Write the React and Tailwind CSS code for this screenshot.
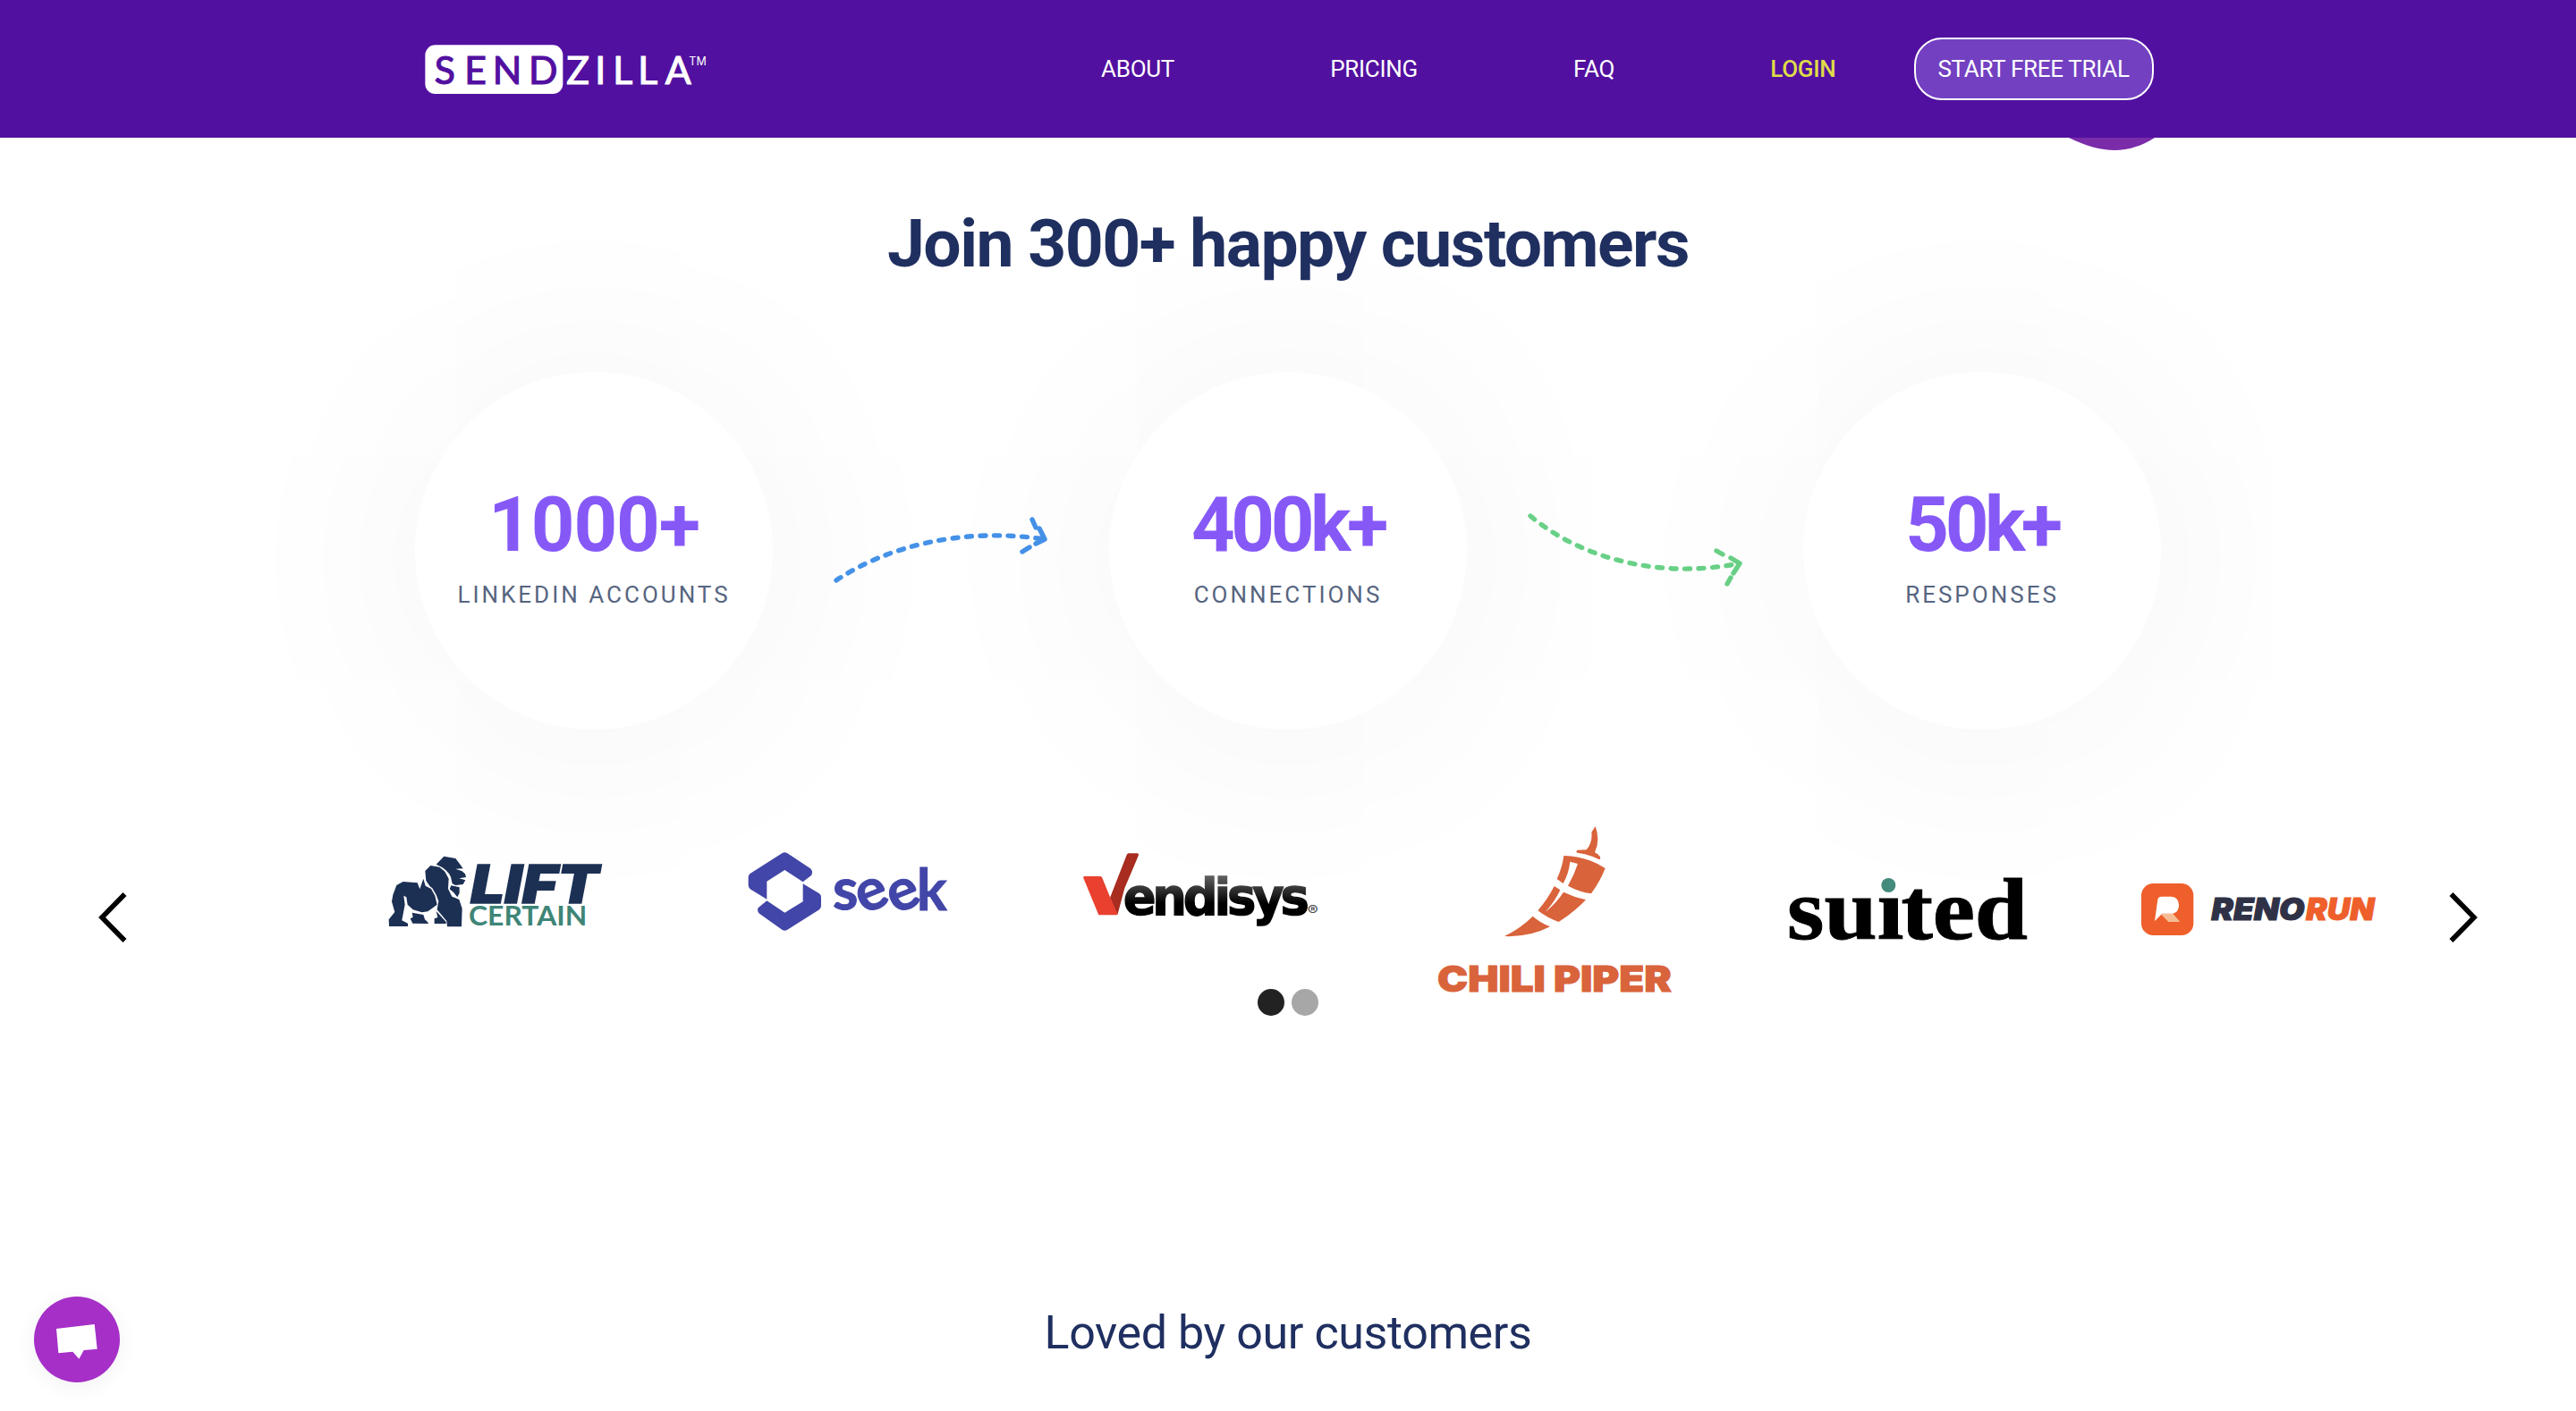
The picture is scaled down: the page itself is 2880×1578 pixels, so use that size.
import React from 'react';

const navLinks = [
  { label: 'ABOUT', className: 'text-white' },
  { label: 'PRICING', className: 'text-white' },
  { label: 'FAQ', className: 'text-white' },
  { label: 'LOGIN', className: 'font-medium text-[#dedc48]' },
];

const SendzillaLogo = () => (
  <svg className="mt-0.5 h-14 w-[315px]" viewBox="105 90 945 168">
    <rect x="106" y="91" width="462" height="164" rx="34" fill="#fff" />
    <g fontFamily="Lato, sans-serif" fontSize="128" strokeWidth="3.5">
      <text x="137 238 332 453" y="221" fill="#5210a0" stroke="#5210a0">SEND</text>
      <text x="580 676 736 820 911" y="221" fill="#fff" stroke="#fff">ZILLA</text>
    </g>
    <text x="991" y="158" fill="#fff" fontFamily="Inter, sans-serif" fontSize="39" textLength="58" lengthAdjust="spacingAndGlyphs">TM</text>
  </svg>
);

const Header = () => (
  <header className="flex h-[154px] items-center bg-[#5210a0] pl-[475px]">
    <SendzillaLogo />
    <nav className="ml-[354px] flex items-center text-[26px] tracking-[-0.3px]">
      {navLinks.map((link) => (
        <a key={link.label} href="#" className={`px-[87.1px] ${link.className}`}>
          {link.label}
        </a>
      ))}
      <a
        href="#"
        className="flex h-[70px] w-[268px] items-center justify-center rounded-[31px] border-2 border-white bg-[#7340c1] text-white"
      >
        START FREE TRIAL
      </a>
    </nav>
  </header>
);

const Stat = ({ value, label, valueClass }) => (
  <div className="flex size-[400px] flex-col items-center rounded-full bg-white pt-[121px] shadow-[0_10px_320px_rgba(0,0,0,0.06)]">
    <div className={`text-[85px] leading-[100px] font-bold text-[#8659f7] ${valueClass}`}>{value}</div>
    <div className="mt-[13px] text-[26px] leading-[30px] tracking-[3px] whitespace-nowrap text-[#56657f]">{label}</div>
  </div>
);

const BlueArrow = () => (
  <svg className="h-[90px] w-[376px]" viewBox="864 571 376 90" fill="none" stroke="#4592e8" strokeWidth="5.4" strokeLinecap="round">
    <path d="M935 649C990 612 1075 589 1167 603" strokeDasharray="6 9.5" />
    <path d="M1168 603L1162 591M1158 590L1154 581M1168 603L1158 608M1151 612L1143 617" />
  </svg>
);

const GreenArrow = () => (
  <svg className="h-[100px] w-[376px]" viewBox="1640 565 376 100" fill="none" stroke="#69d187" strokeWidth="5.4" strokeLinecap="round">
    <path d="M1711 577C1768 625 1856 648 1945 630" strokeDasharray="6 9.5" />
    <path d="M1945 630L1935 624M1926 620L1919 616M1945 630L1938 641M1935 646L1931 653" />
  </svg>
);

const Chevron = ({ flipped }) => (
  <svg className={`mt-[86px] h-[60px] w-8 shrink-0 ${flipped ? '-scale-x-100' : ''}`} viewBox="0 0 32 60" fill="none" stroke="#000" strokeWidth="5.6">
    <path d="M2.5 4L28 30L2.5 56" />
  </svg>
);

const LiftCertain = () => (
  <svg className="mt-[30px] h-[120px] w-[270px] shrink-0" viewBox="0 0 810 360">
    <g fill="#1c3054">
      <path d="M203 80L229 53L268 60L281 77L293 94L268 95L290 103L300 112L303 123L280 127L301 133L293 147L268 150L257 145L252 122Q240 95 203 80Z" />
      <path d="M253 151L268 154L281 157L281 176L274 190L262 175L248 163Z" />
      <path d="M166 102L184 84L214 89L232 104L245 128L243 162L256 188L280 198L290 228L288 289L240 289L238 270L206 232L211 203L203 182L190 160L182 154L169 135Z" />
      <path d="M70 150L92 138L140 142L148 163L160 128L167 152L186 162L199 185L206 215L175 238L155 241L125 232L107 215L103 190L94 185L98 215L88 268L108 278L108 288L45 288L44 265L64 240L54 205L58 182Z" />
      <path d="M122 242L160 249L165 265L176 275L176 279L124 278L116 262L125 257Z" />
      <path d="M203 237L236 273L236 279L197 279L197 262L208 258Z" />
    </g>
    <text x="318" y="211" fill="#1c3054" stroke="#1c3054" strokeWidth="4" fontFamily="Inter, sans-serif" fontWeight="900" fontStyle="italic" fontSize="178" textLength="430" lengthAdjust="spacingAndGlyphs">LIFT</text>
    <text x="312" y="286" fill="#3f8577" fontFamily="Lato, sans-serif" fontWeight="700" fontSize="91" textLength="397" lengthAdjust="spacingAndGlyphs">CERTAIN</text>
  </svg>
);

const Seek = () => (
  <svg className="mt-5 ml-[130px] h-[130px] w-[260px] shrink-0" viewBox="0 0 780 390" fill="#4246a8">
    <path d="M164 72Q172 67 180 72L258 124Q268 132 262 146L233 169L172 129L112 167L112 227L56 193Q50 188 50 180L50 152Q50 145 57 140Z" />
    <path d="M233 175L288 208Q294 212 294 220L294 250Q294 257 288 262L180 330Q172 335 164 330L87 275Q78 266 83 256L112 232L172 272L233 235Z" />
    <g fontFamily="Lato, sans-serif" fontWeight="700" fontSize="194" stroke="#4246a8" strokeWidth="3">
      <text x="333" y="262">s</text>
      <text x="413" y="261" transform="rotate(-22 466 213)">e</text>
      <text x="519" y="261" transform="rotate(-22 572 213)">e</text>
      <text x="615" y="263" textLength="101" lengthAdjust="spacingAndGlyphs">k</text>
    </g>
  </svg>
);

const Vendisys = () => (
  <svg className="mt-5 ml-[110px] h-[130px] w-[310px] shrink-0" viewBox="0 0 930 390">
    <defs>
      <linearGradient id="vendisys" gradientUnits="userSpaceOnUse" x1="0" y1="150" x2="0" y2="280">
        <stop offset="0" stopColor="#606060" />
        <stop offset="0.7" stopColor="#000" />
      </linearGradient>
    </defs>
    <path d="M153 222L210 76L215 73L247 73L249 79L202 190L178 280Z" fill="#a82c1f" />
    <path d="M66 150L121 150L126 153L154 222L178 276L175 280L115 280L63 154Z" fill="#ea402f" />
    <text x="197" y="279" fill="url(#vendisys)" stroke="url(#vendisys)" strokeWidth="4" fontFamily="'DejaVu Sans', sans-serif" fontWeight="700" fontSize="170" letterSpacing="-13" textLength="612" lengthAdjust="spacingAndGlyphs">endisys</text>
    <text x="815" y="282" fill="#444" fontFamily="Inter, sans-serif" fontSize="46" textLength="36" lengthAdjust="spacingAndGlyphs">®</text>
  </svg>
);

const ChiliPiper = () => (
  <svg className="ml-[90px] h-[210px] w-[300px] shrink-0" viewBox="0 0 900 630" fill="#d9633b">
    <path d="M581 42L568 62Q572 95 551 121L520 122Q515 128 520 131Q560 136 594 154Q600 152 596 143Q590 135 579 130Q598 90 581 42Z" />
    <path d="M475 141Q550 142 614 183Q598 225 567 268Q525 262 489 242Q510 205 522 168L496 161Q492 200 473 234L452 219Q470 180 475 141Z" />
    <path d="M443 243L463 256Q445 295 413 330Q450 300 474 263Q510 280 549 289Q510 330 458 363Q420 350 388 325Q422 285 443 243Z" />
    <path d="M371 344Q395 365 429 379Q360 415 276 411Q330 385 371 344Z" />
    <text x="51" y="597" stroke="#d9633b" strokeWidth="3" fontFamily="Inter, sans-serif" fontWeight="900" fontSize="118" textLength="785" lengthAdjust="spacingAndGlyphs">CHILI PIPER</text>
  </svg>
);

const Suited = () => (
  <svg className="mt-[50px] ml-[90px] h-[110px] w-[300px] shrink-0 overflow-visible" viewBox="0 0 900 330">
    <text
      x="49 162 324 397 493 621"
      y="270"
      transform="scale(1.1 1)"
      stroke="#000"
      strokeWidth="3"
      fontFamily="'Liberation Serif', serif"
      fontWeight="700"
      fontSize="290"
    >
      suited
    </text>
    <circle cx="398" cy="95" r="35" fill="#fff" />
    <circle cx="394" cy="90" r="24" fill="#458b7d" />
  </svg>
);

const RenoRun = () => (
  <svg className="mt-[50px] ml-[90px] h-[110px] w-[300px] shrink-0" viewBox="0 0 900 330">
    <rect x="72" y="84" width="175" height="174" rx="40" fill="#ee5f2b" />
    <path d="M142 185L178 185L202 213L163 213L139 188Z" fill="#f6bd95" />
    <path d="M127 138Q129 128 140 128L172 128Q198 130 198 157Q198 180 178 185L142 185L117 210Z" fill="#fff" />
    <g fontFamily="Inter, sans-serif" fontWeight="900" fontStyle="italic" fontSize="102" strokeWidth="3">
      <text x="307" y="208" fill="#2f3147" stroke="#2f3147" textLength="313" lengthAdjust="spacingAndGlyphs">RENO</text>
      <text x="624" y="208" fill="#ee5f2b" stroke="#ee5f2b" textLength="230" lengthAdjust="spacingAndGlyphs">RUN</text>
    </g>
  </svg>
);

const ChatButton = () => (
  <button className="fixed top-[1450px] left-[38px] size-24 rounded-full bg-[#a62fc8] shadow-[0_4px_24px_rgba(0,0,0,0.06)]">
    <svg className="size-24" viewBox="54 60 288 288" fill="#fff">
      <path d="M129 168L257 153L266 236L221 240L205 269L184 245L136 250Z" />
    </svg>
  </button>
);

const App = () => {
  return (
    <div className="h-[1578px] w-[2880px] overflow-hidden bg-white font-['Roboto',sans-serif]">
      <Header />
      <svg className="ml-[2313px] h-3.5 w-24" viewBox="0 0 96 14">
        <path d="M0 0C38 19 68 18 96 0Z" fill="#7a2ca9" />
      </svg>

      <h2 className="relative z-10 mt-[59px] text-center text-[75px] leading-[90px] font-bold tracking-[-1.5px] text-[#1f2f60]">
        Join 300+ happy customers
      </h2>

      <section className="mt-[99px] flex items-start pl-[464px]">
        <Stat value="1000+" label="LINKEDIN ACCOUNTS" valueClass="tracking-[-1.1px]" />
        <div className="mt-[155px]">
          <BlueArrow />
        </div>
        <Stat value="400k+" label="CONNECTIONS" valueClass="tracking-[-4.4px]" />
        <div className="mt-[149px]">
          <GreenArrow />
        </div>
        <Stat value="50k+" label="RESPONSES" valueClass="tracking-[-4.5px]" />
      </section>

      <section className="relative mt-[94px] flex h-[196px] items-start pl-[110px]">
        <Chevron flipped />
        <div className="ml-[278px] flex items-start">
          <LiftCertain />
          <Seek />
          <Vendisys />
          <ChiliPiper />
          <Suited />
          <RenoRun />
        </div>
        <div className="ml-[68px]">
          <Chevron />
        </div>
      </section>

      <div className="flex justify-center gap-2">
        <span className="size-[30px] rounded-full bg-[#222]" />
        <span className="size-[30px] rounded-full bg-[#a7a7a7]" />
      </div>

      <h3 className="mt-[324px] text-center text-[52px] leading-[62px] tracking-[-0.4px] text-[#1f2f60]">
        Loved by our customers
      </h3>

      <ChatButton />
    </div>
  );
};

export default App;
